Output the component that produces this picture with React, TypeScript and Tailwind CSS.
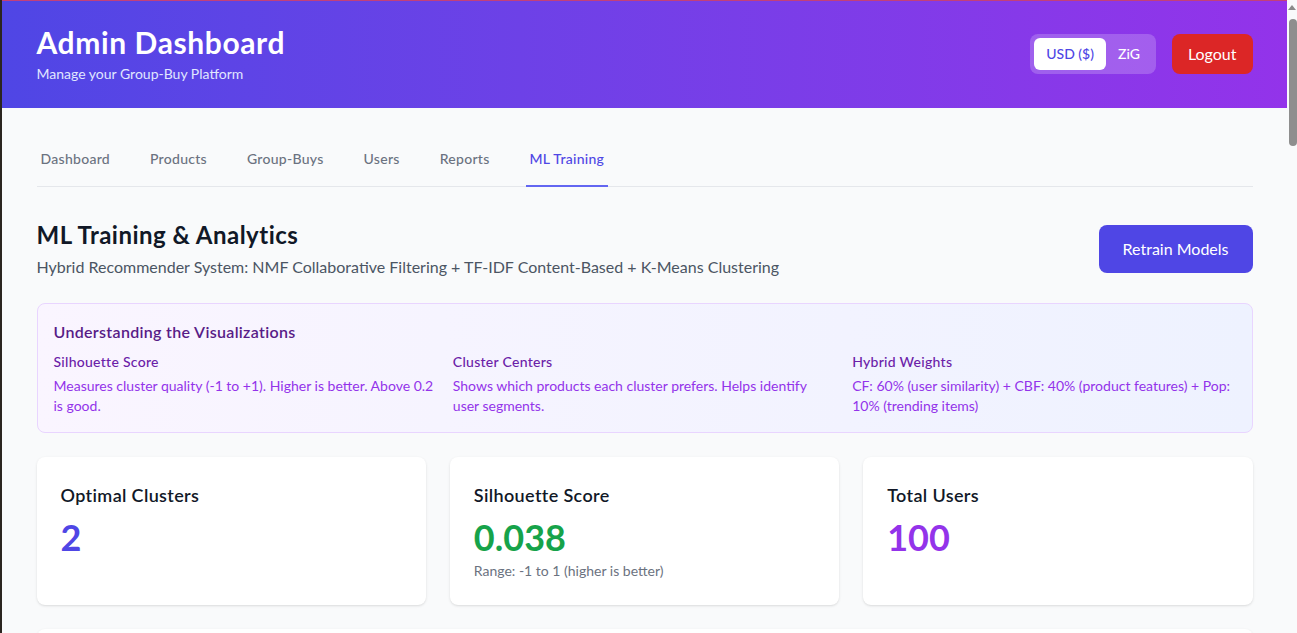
import { useState } from "react";

const tabs = ["Dashboard", "Products", "Group-Buys", "Users", "Reports", "ML Training"];

const guide = [
  {
    title: "Silhouette Score",
    body: "Measures cluster quality (-1 to +1). Higher is better. Above 0.2 is good.",
  },
  {
    title: "Cluster Centers",
    body: "Shows which products each cluster prefers. Helps identify user segments.",
  },
  {
    title: "Hybrid Weights",
    body: "CF: 60% (user similarity) + CBF: 40% (product features) + Pop: 10% (trending items)",
  },
];

const StatCard = ({
  label,
  value,
  color,
  note,
}: {
  label: string;
  value: string;
  color: string;
  note?: string;
}) => (
  <div className="bg-white rounded-lg shadow p-6">
    <h3 className="text-lg font-semibold tracking-[0.02em] text-[#111827] mb-2">{label}</h3>
    <p className={`text-4xl font-bold ${color}`}>{value}</p>
    {note && <p className="text-sm text-[#6b7280] mt-1">{note}</p>}
  </div>
);

const App = () => {
  const [currency, setCurrency] = useState("USD");
  const [active, setActive] = useState("ML Training");

  return (
    <div className="flex min-h-screen bg-[#f9fafb] font-['Lato','Noto_Sans',sans-serif]">
      {/* window edge */}
      <div className="w-[2px] shrink-0 bg-[#2b2520]" />

      <div className="flex-1 min-w-0">
        <header className="bg-gradient-to-r from-[#4f46e5] to-[#9333ea] border-t border-[#c2407a]">
          <div className="max-w-7xl mx-auto px-8 pt-[23px] pb-6 flex items-center justify-between">
            <div>
              <h1 className="text-3xl font-bold tracking-[0.02em] text-white">Admin Dashboard</h1>
              <p className="text-sm text-[#e0e7ff] mt-1">Manage your Group-Buy Platform</p>
            </div>
            <div className="flex items-center gap-4">
              <div className="flex bg-white/20 rounded-lg p-1">
                <button
                  className={`px-3 py-1.5 text-sm font-medium rounded-md ${
                    currency === "USD" ? "bg-white text-[#4f46e5]" : "text-white"
                  }`}
                  onClick={() => setCurrency("USD")}
                >
                  USD ($)
                </button>
                <button
                  className={`px-3 py-1.5 text-sm font-medium rounded-md ${
                    currency === "ZiG" ? "bg-white text-[#4f46e5]" : "text-white"
                  }`}
                  onClick={() => setCurrency("ZiG")}
                >
                  ZiG
                </button>
              </div>
              <button className="bg-[#dc2626] hover:bg-[#b91c1c] text-white px-4 py-2 rounded-lg">
                Logout
              </button>
            </div>
          </div>
        </header>

        <main className="max-w-7xl mx-auto px-8 pt-[25px] pb-12">
          <nav className="flex gap-8 border-b border-[#e5e7eb] mb-8">
            {tabs.map((tab) => (
              <button
                key={tab}
                onClick={() => setActive(tab)}
                className={`px-1 py-4 text-sm font-medium tracking-[0.02em] border-b-2 -mb-px ${
                  active === tab
                    ? "border-[#6366f1] text-[#4f46e5]"
                    : "border-transparent text-[#6b7280]"
                }`}
              >
                {tab}
              </button>
            ))}
          </nav>

          <div className="flex items-center justify-between mb-6">
            <div>
              <h2 className="text-2xl font-bold tracking-[0.02em] text-[#111827]">
                ML Training &amp; Analytics
              </h2>
              <p className="text-[#4b5563] mt-1">
                Hybrid Recommender System: NMF Collaborative Filtering + TF-IDF Content-Based + K-Means Clustering
              </p>
            </div>
            <button className="bg-[#4f46e5] hover:bg-[#4338ca] text-white px-6 py-3 rounded-lg">
              Retrain Models
            </button>
          </div>

          <div className="bg-gradient-to-r from-[#faf5ff] to-[#eef2ff] border border-[#e9d5ff] rounded-lg p-4 mb-6">
            <h3 className="font-semibold tracking-[0.02em] text-[#581c87] mb-2">
              Understanding the Visualizations
            </h3>
            <div className="grid grid-cols-3 gap-4">
              {guide.map((g) => (
                <div key={g.title}>
                  <p className="text-sm font-medium tracking-[0.02em] text-[#6b21a8]">{g.title}</p>
                  <p className="text-sm text-[#9333ea] mt-1">{g.body}</p>
                </div>
              ))}
            </div>
          </div>

          <div className="grid grid-cols-3 gap-6 mb-6">
            <StatCard label="Optimal Clusters" value="2" color="text-[#4f46e5]" />
            <StatCard
              label="Silhouette Score"
              value="0.038"
              color="text-[#16a34a]"
              note="Range: -1 to 1 (higher is better)"
            />
            <StatCard label="Total Users" value="100" color="text-[#9333ea]" />
          </div>

          <div className="bg-white rounded-lg shadow p-6 h-[360px]">
            <h3 className="text-lg font-semibold text-[#111827]">Cluster Centers</h3>
          </div>
        </main>
      </div>

      {/* room for the scrollbar */}
      <div className="w-[10px] shrink-0" />

      {/* scrollbar drawn over the right edge */}
      <div className="fixed top-0 right-0 h-screen w-[10px] bg-[#f9fafb]">
        <div className="mx-auto mt-[5px] w-0 h-0 border-l-[4px] border-r-[4px] border-b-[5px] border-l-transparent border-r-transparent border-b-[#8a8a8a]" />
        <div className="ml-[2px] mt-[9px] w-[8px] h-[127px] rounded-full bg-[#8e8e8e]" />
      </div>
    </div>
  );
};

export default App;
